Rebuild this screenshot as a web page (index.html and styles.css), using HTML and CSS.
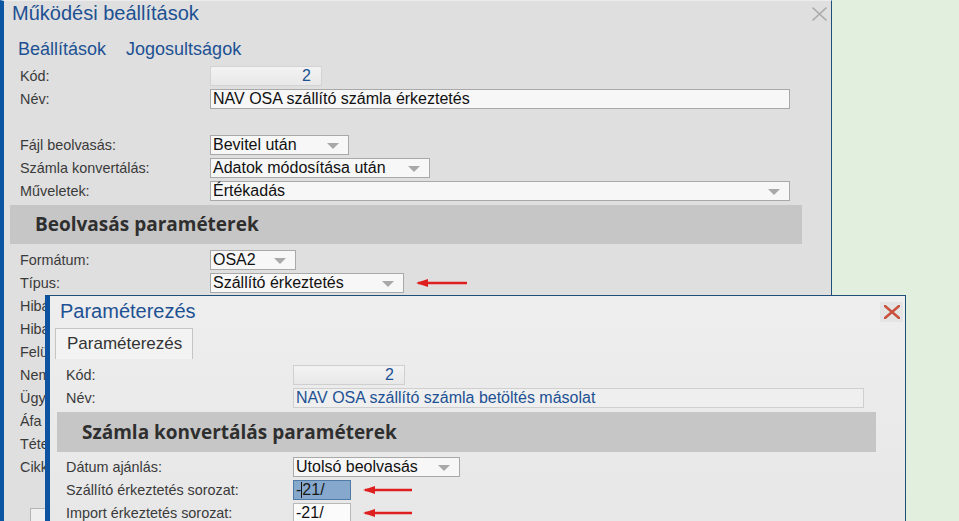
FILE: index.html
```html
<!DOCTYPE html>
<html lang="hu">
<head>
  <meta charset="UTF-8">
  <title>Működési beállítások</title>
  <link rel="stylesheet" href="styles.css">
</head>
<body>

  <div class="window main-win">
    <div class="win-title">
      <span>Működési beállítások</span>
      <svg class="close close-grey" width="15" height="14" viewBox="0 0 15 14"><path d="M1 1 L14 13 M14 1 L1 13" /></svg>
    </div>

    <div class="tabs">
      <span>Beállítások</span>
      <span>Jogosultságok</span>
    </div>

    <div class="form top-form">
      <div class="row"><label>Kód:</label><div class="field num" style="width:112px">2</div></div>
      <div class="row"><label>Név:</label><div class="field" style="width:580px">NAV OSA szállító számla érkeztetés</div></div>
      <div class="row"></div>
      <div class="row"><label>Fájl beolvasás:</label><div class="field select" style="width:139px">Bevitel után</div></div>
      <div class="row"><label>Számla konvertálás:</label><div class="field select" style="width:220px">Adatok módosítása után</div></div>
      <div class="row"><label>Műveletek:</label><div class="field select" style="width:580px">Értékadás</div></div>
    </div>

    <div class="section">Beolvasás paraméterek</div>

    <div class="form">
      <div class="row"><label>Formátum:</label><div class="field select" style="width:86px">OSA2</div></div>
      <div class="row">
        <label>Típus:</label>
        <div class="with-arrow">
          <div class="field select" style="width:194px">Szállító érkeztetés</div>
          <svg class="arrow" width="52" height="10" viewBox="0 0 52 10"><path d="M2 5 L51 5" /><path class="head" d="M0 5 L12 1 L12 9 Z" /></svg>
        </div>
      </div>
      <div class="row"><label>Hibás tételek:</label><div class="field" style="width:160px"></div><div class="field" style="width:410px"></div></div>
      <div class="row"><label>Hibaüzenet:</label><div class="field" style="width:580px"></div></div>
      <div class="row"><label>Felülírás:</label><div class="field" style="width:580px"></div></div>
      <div class="row"><label>Nem létező cikk:</label><div class="field" style="width:580px"></div></div>
      <div class="row"><label>Ügyfél:</label><div class="field" style="width:580px"></div></div>
      <div class="row"><label>Áfa kulcs:</label><div class="field" style="width:580px"></div></div>
      <div class="row"><label>Tétel:</label><div class="field" style="width:580px"></div></div>
      <div class="row"><label>Cikk:</label><div class="field" style="width:580px"></div></div>
    </div>

    <div class="footer"><button>Mentés</button></div>
  </div>

  <div class="window param-win">
    <div class="win-title">
      <span>Paraméterezés</span>
      <span class="close-box">
        <svg class="close close-red" width="16" height="14" viewBox="0 0 16 14"><path d="M1 1 L15 13 M15 1 L1 13" /></svg>
      </span>
    </div>

    <div class="tab-strip"><span class="tab">Paraméterezés</span></div>

    <div class="form">
      <div class="row"><label>Kód:</label><div class="field light num" style="width:112px">2</div></div>
      <div class="row"><label>Név:</label><div class="field light blue" style="width:571px">NAV OSA szállító számla betöltés másolat</div></div>
    </div>

    <div class="section">Számla konvertálás paraméterek</div>

    <div class="form">
      <div class="row"><label>Dátum ajánlás:</label><div class="field select" style="width:167px">Utolsó beolvasás</div></div>
      <div class="row">
        <label>Szállító érkeztetés sorozat:</label>
        <div class="with-arrow">
          <div class="field selected" style="width:58px">-<i class="caret"></i>21/</div>
          <svg class="arrow" width="50" height="10" viewBox="0 0 50 10"><path d="M2 5 L49 5" /><path class="head" d="M0 5 L12 1 L12 9 Z" /></svg>
        </div>
      </div>
      <div class="row">
        <label>Import érkeztetés sorozat:</label>
        <div class="with-arrow">
          <div class="field white" style="width:58px">-21/</div>
          <svg class="arrow" width="50" height="10" viewBox="0 0 50 10"><path d="M2 5 L49 5" /><path class="head" d="M0 5 L12 1 L12 9 Z" /></svg>
        </div>
      </div>
    </div>
  </div>

</body>
</html>
```

FILE: styles.css
```css
body {
  margin: 0;
  background-color: #e2efdf;
  font-family: "Liberation Sans", Arial, sans-serif;
  color: #3a3a3a;
  overflow: hidden;
  height: 521px;
  position: relative;
}

.window {
  position: absolute;
  box-sizing: border-box;
}

.main-win {
  left: 0;
  top: 0;
  width: 832px;
  height: 560px;
  background-color: #dfdfdf;
  border-left: 4px solid #0b55a3;
  border-right: 1px solid #1f4e79;
  border-top: 1px solid #ececec;
}

.param-win {
  left: 45px;
  top: 295px;
  width: 861px;
  height: 260px;
  background: linear-gradient(#eeeeee, #e6e6e6);
  border-left: 5px solid #0d53a1;
  border-top: 1px solid #1f4e79;
  border-right: 1px solid #1f4e79;
}

.win-title {
  display: flex;
  justify-content: space-between;
  align-items: center;
  color: #1d5193;
  font-size: 20px;
}

.main-win .win-title {
  height: 25px;
  padding: 0 4px 0 8px;
}

.param-win .win-title {
  height: 31px;
  padding: 0 2px 0 10px;
}

.close path {
  fill: none;
  stroke-linecap: round;
}

.close-grey path {
  stroke: #a9a9a9;
  stroke-width: 1.6;
}

.close-red path {
  stroke: #c9513b;
  stroke-width: 2.4;
}

.close-box {
  display: flex;
  align-items: center;
  justify-content: center;
  width: 23px;
  height: 20px;
  background-color: #e4e4e4;
}

.tabs {
  display: flex;
  gap: 20px;
  padding: 12px 0 0 14px;
  height: 24px;
  color: #1d5193;
  font-size: 18px;
  line-height: 22px;
}

.form {
  padding-left: 16px;
}

.top-form {
  margin-top: 2px;
}

.row {
  display: flex;
  align-items: center;
  height: 23px;
  font-size: 14.4px;
}

.row label {
  flex: 0 0 190px;
  white-space: nowrap;
}

.param-win .row label {
  flex-basis: 227px;
}

.field {
  box-sizing: border-box;
  height: 20px;
  line-height: 18px;
  padding: 0 2px;
  font-size: 16px;
  color: #111;
  background-color: #f7f7f7;
  border: 1px solid #a9a9a9;
  white-space: nowrap;
  position: relative;
}

.field + .field {
  margin-left: 10px;
}

.num {
  text-align: right;
  padding-right: 10px;
  color: #1d5193;
  background: linear-gradient(#f3f3f3, #e8e8e8);
  border-color: #d3d3d3;
}

.field.light {
  background-color: #efefef;
  border-color: #cfcfcf;
}

.field.blue {
  color: #1d5193;
}

.field.white {
  background-color: #fbfbfb;
  border-color: #b8b8b8;
}

.field.selected {
  background-color: #86a8cc;
  border-color: #4f7aa6;
  color: #1a1a1a;
}

.caret {
  display: inline-block;
  width: 1px;
  height: 16px;
  background-color: #111;
  vertical-align: -3px;
}

.select::after {
  content: "";
  position: absolute;
  right: 9px;
  top: 7px;
  border-left: 6px solid transparent;
  border-right: 6px solid transparent;
  border-top: 6px solid #a8a8a8;
}

.with-arrow {
  display: flex;
  align-items: center;
  gap: 12px;
}

.arrow path {
  stroke: #dd1f1f;
  stroke-width: 2.6;
  fill: none;
}

.arrow .head {
  fill: #dd1f1f;
  stroke: none;
}

.section {
  margin: 3px 0 4px 6px;
  width: 792px;
  height: 39px;
  line-height: 39px;
  padding-left: 25px;
  box-sizing: border-box;
  background-color: #c6c6c6;
  font-family: "Open Sans", "Noto Sans", sans-serif;
  font-weight: 700;
  font-size: 19px;
  color: #2f2f2f;
}

.param-win .section {
  margin: 3px 0 3px 7px;
  width: 819px;
  height: 40px;
  line-height: 40px;
}

.tab-strip {
  padding: 1px 0 0 5px;
  height: 36px;
  box-sizing: border-box;
}

.tab {
  display: inline-block;
  box-sizing: border-box;
  height: 31px;
  line-height: 30px;
  padding: 0 10px 0 11px;
  border: 1px solid #c4c4c4;
  border-bottom: none;
  background-color: #f3f3f3;
  font-size: 17px;
  color: #333;
}

.footer {
  padding: 30px 0 0 26px;
}

.footer button {
  font-family: "Liberation Sans", Arial, sans-serif;
  font-size: 15px;
  height: 26px;
  padding: 0 14px;
  background-color: #efefef;
  border: 1px solid #b5b5b5;
}
```
